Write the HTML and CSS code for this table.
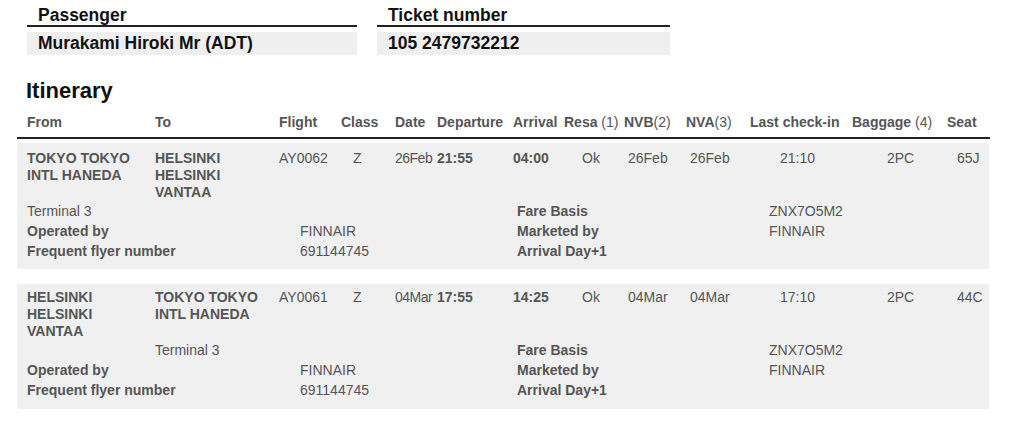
FILE: index.html
```html
<!DOCTYPE html>
<html lang="en">
<head>
<meta charset="utf-8">
<title>Itinerary</title>
<link rel="stylesheet" href="styles.css">
</head>
<body>
<div class="parties">
  <div class="party passenger">
    <div class="party-label">Passenger</div>
    <div class="party-value">Murakami Hiroki Mr (ADT)</div>
  </div>
  <div class="party ticket">
    <div class="party-label">Ticket number</div>
    <div class="party-value">105 2479732212</div>
  </div>
</div>

<h2 class="title">Itinerary</h2>

<div class="itinerary">
  <div class="thead cols">
    <div>From</div>
    <div>To</div>
    <div>Flight</div>
    <div>Class</div>
    <div>Date</div>
    <div>Departure</div>
    <div>Arrival</div>
    <div>Resa <span class="n">(1)</span></div>
    <div>NVB<span class="n">(2)</span></div>
    <div>NVA<span class="n">(3)</span></div>
    <div>Last check-in</div>
    <div>Baggage <span class="n">(4)</span></div>
    <div>Seat</div>
  </div>

  <div class="seg first">
    <div class="seg-main cols">
      <div class="b">TOKYO TOKYO<br>INTL HANEDA</div>
      <div class="b">HELSINKI<br>HELSINKI<br>VANTAA</div>
      <div>AY0062</div>
      <div class="c-class">Z</div>
      <div class="c-date">26Feb</div>
      <div class="b">21:55</div>
      <div class="b">04:00</div>
      <div class="c-resa">Ok</div>
      <div class="c-nv">26Feb</div>
      <div class="c-nv">26Feb</div>
      <div class="c-last">21:10</div>
      <div class="c-bag">2PC</div>
      <div class="c-seat">65J</div>
    </div>
    <div class="seg-details">
      <div class="span2">Terminal 3</div>
      <div></div>
      <div class="b">Fare Basis</div>
      <div>ZNX7O5M2</div>
      <div class="b span2">Operated by</div>
      <div>FINNAIR</div>
      <div class="b">Marketed by</div>
      <div>FINNAIR</div>
      <div class="b span2">Frequent flyer number</div>
      <div>691144745</div>
      <div class="b">Arrival Day+1</div>
      <div></div>
    </div>
  </div>

  <div class="seg">
    <div class="seg-main cols">
      <div class="b">HELSINKI<br>HELSINKI<br>VANTAA</div>
      <div class="b">TOKYO TOKYO<br>INTL HANEDA</div>
      <div>AY0061</div>
      <div class="c-class">Z</div>
      <div class="c-date">04Mar</div>
      <div class="b">17:55</div>
      <div class="b">14:25</div>
      <div class="c-resa">Ok</div>
      <div class="c-nv">04Mar</div>
      <div class="c-nv">04Mar</div>
      <div class="c-last">17:10</div>
      <div class="c-bag">2PC</div>
      <div class="c-seat">44C</div>
    </div>
    <div class="seg-details">
      <div></div>
      <div>Terminal 3</div>
      <div></div>
      <div class="b">Fare Basis</div>
      <div>ZNX7O5M2</div>
      <div class="b span2">Operated by</div>
      <div>FINNAIR</div>
      <div class="b">Marketed by</div>
      <div>FINNAIR</div>
      <div class="b span2">Frequent flyer number</div>
      <div>691144745</div>
      <div class="b">Arrival Day+1</div>
      <div></div>
    </div>
  </div>
</div>
</body>
</html>
```

FILE: styles.css
```css
html, body {
  margin: 0;
  padding: 0;
  background: #fff;
}

body {
  font-family: "Liberation Sans", Arial, Helvetica, sans-serif;
  color: #111;
}

.parties {
  display: flex;
  gap: 20px;
  padding: 5px 0 0 27px;
}

.passenger { width: 330px; }
.ticket { width: 293px; }

.party-label {
  font-weight: bold;
  font-size: 17.5px;
  line-height: 20px;
  padding-left: 11px;
  border-bottom: 2px solid #222;
}

.party-value {
  margin-top: 5px;
  height: 23px;
  line-height: 22px;
  padding-left: 11px;
  background: #efefef;
  font-weight: bold;
  font-size: 17.5px;
}

.title {
  margin: 23px 0 0 26px;
  font-size: 22px;
  line-height: 26px;
  font-weight: bold;
  color: #111;
}

.itinerary {
  margin-left: 17px;
  width: 973px;
}

.cols {
  display: grid;
  grid-template-columns: 128px 124px 62px 54px 42px 76px 51px 60px 62px 64px 102px 95px 1fr;
}

.thead {
  margin-top: 10px;
  padding: 0 0 7px 10px;
  border-bottom: 2px solid #222;
  font-size: 14px;
  line-height: 16px;
  font-weight: bold;
  color: #555;
  white-space: nowrap;
}

.thead .n { font-weight: normal; }

.seg {
  margin-top: 15px;
  margin-right: 1px;
  background: #f0f0f0;
  padding: 5px 0 9px 10px;
  font-size: 14px;
  color: #555;
}

.seg.first {
  margin-top: 4px;
  padding-top: 7px;
  padding-bottom: 8px;
}

.seg-main {
  line-height: 17px;
  white-space: nowrap;
}

.b { font-weight: bold; }

.c-class { padding-left: 12px; }
.c-date { letter-spacing: -0.5px; }
.c-resa { padding-left: 18px; }
.c-nv { padding-left: 4px; }
.c-last { padding-left: 30px; }
.c-bag { padding-left: 35px; }
.c-seat { padding-left: 10px; }

.seg-details {
  display: grid;
  grid-template-columns: 128px 145px 217px 252px 1fr;
  line-height: 20px;
  white-space: nowrap;
}

.span2 { grid-column: span 2; }
```
